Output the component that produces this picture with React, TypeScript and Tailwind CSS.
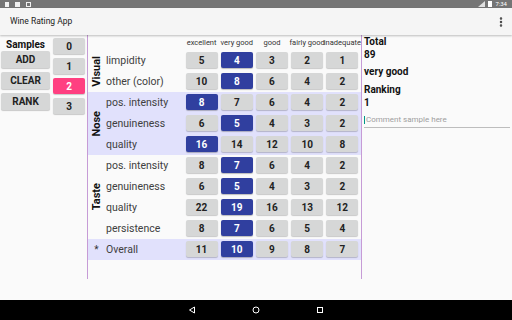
import { MoreVertical } from "lucide-react";

type Row = { label: string; values: number[]; selected: number };
type Section = { name: string; tinted: boolean; rows: Row[] };

const columns = ["excellent", "very good", "good", "fairly good", "inadequate"];

const sections: Section[] = [
  {
    name: "Visual",
    tinted: false,
    rows: [
      { label: "limpidity", values: [5, 4, 3, 2, 1], selected: 1 },
      { label: "other (color)", values: [10, 8, 6, 4, 2], selected: 1 },
    ],
  },
  {
    name: "Nose",
    tinted: true,
    rows: [
      { label: "pos. intensity", values: [8, 7, 6, 4, 2], selected: 0 },
      { label: "genuineness", values: [6, 5, 4, 3, 2], selected: 1 },
      { label: "quality", values: [16, 14, 12, 10, 8], selected: 0 },
    ],
  },
  {
    name: "Taste",
    tinted: false,
    rows: [
      { label: "pos. intensity", values: [8, 7, 6, 4, 2], selected: 1 },
      { label: "genuineness", values: [6, 5, 4, 3, 2], selected: 1 },
      { label: "quality", values: [22, 19, 16, 13, 12], selected: 1 },
      { label: "persistence", values: [8, 7, 6, 5, 4], selected: 1 },
    ],
  },
];

const overall: Row = { label: "Overall", values: [11, 10, 9, 8, 7], selected: 1 };

function ScoreCells({ row }: { row: Row }) {
  return (
    <>
      {row.values.map((v, i) => (
        <div key={i} className="flex w-[35.2px] justify-center pt-[2px]">
          <div
            className={
              i === row.selected
                ? "flex h-[16px] w-[32px] items-center justify-center rounded-[2px] bg-[#303f9f] text-[10px] font-bold text-white shadow-[0_1px_1px_rgba(0,0,0,0.25)]"
                : "flex h-[16px] w-[32px] items-center justify-center rounded-[2px] bg-[#d6d7d7] text-[10px] font-bold text-[#222] shadow-[0_1px_1px_rgba(0,0,0,0.2)]"
            }
          >
            {v}
          </div>
        </div>
      ))}
    </>
  );
}

function ScoreRow({ row }: { row: Row }) {
  return (
    <div className="flex h-[21px] items-start">
      <div className="w-[79px] pl-[1px] text-[10.5px] leading-[21px] text-[#404040]">{row.label}</div>
      <ScoreCells row={row} />
    </div>
  );
}

function SideButton({ label }: { label: string }) {
  return (
    <div className="flex h-[17px] w-[49px] items-center justify-center rounded-[2px] bg-[#d6d7d7] text-[10px] font-bold text-[#222] shadow-[0_1px_1px_rgba(0,0,0,0.2)]">
      {label}
    </div>
  );
}

export default function App() {
  return (
    <div className="flex h-[320px] w-[512px] flex-col overflow-hidden bg-[#fafafa] font-['Roboto',sans-serif]">
      {/* status bar */}
      <div className="flex h-[8px] items-center bg-[#757575] px-[5px]">
        <div className="flex gap-[6px]">
          <div className="h-[5px] w-[4px] bg-white/90" />
          <div className="h-[5px] w-[5px] bg-white/90" />
          <div className="h-[5px] w-[5px] border border-white/90" />
        </div>
        <div className="ml-auto flex items-center gap-[3px]">
          <svg width="7" height="6" viewBox="0 0 7 6">
            <path d="M7 0 L7 6 L0 6 Z" fill="#e0e0e0" />
          </svg>
          <div className="h-[6px] w-[4px] bg-white" />
          <span className="text-[6px] leading-[8px] text-white">7:34</span>
        </div>
      </div>

      {/* app bar */}
      <div className="relative z-10 flex h-[27px] items-center bg-[#f5f5f5] pl-[10px] pr-[5px] shadow-[0_1px_2px_rgba(0,0,0,0.25)]">
        <span className="text-[8.5px] text-[#212121]">Wine Rating App</span>
        <MoreVertical size={12} strokeWidth={3} className="ml-auto text-[#444]" />
      </div>

      <div className="flex flex-1">
        {/* samples */}
        <div className="flex w-[87px]">
          <div className="flex w-[52px] flex-col items-start pl-[1px]">
            <div className="w-[49px] pt-[3px] text-center text-[10px] font-bold leading-[13px] text-[#111]">
              Samples
            </div>
            <div className="flex flex-col gap-[4px]">
              <SideButton label="ADD" />
              <SideButton label="CLEAR" />
              <SideButton label="RANK" />
            </div>
          </div>
          <div className="flex flex-col gap-[4px] pl-[1px] pt-[3px]">
            {[0, 1, 2, 3].map((n) => (
              <div
                key={n}
                className={
                  n === 2
                    ? "flex h-[16px] w-[32px] items-center justify-center rounded-[2px] bg-[#ff4081] text-[10px] font-bold text-white shadow-[0_1px_1px_rgba(0,0,0,0.2)]"
                    : "flex h-[16px] w-[32px] items-center justify-center rounded-[2px] bg-[#d6d7d7] text-[10px] font-bold text-[#222] shadow-[0_1px_1px_rgba(0,0,0,0.2)]"
                }
              >
                {n}
              </div>
            ))}
          </div>
        </div>

        {/* rating table */}
        <div className="h-[244px] w-[275px] border-x border-[#c69bd6]">
          <div className="flex h-[15px] items-center pl-[96px]">
            {columns.map((c) => (
              <div key={c} className="flex w-[35.2px] justify-center whitespace-nowrap text-[7.5px] text-[#333]">
                {c}
              </div>
            ))}
          </div>
          {sections.map((s) => (
            <div key={s.name} className={s.tinted ? "flex bg-[#e1e1fc]" : "flex"}>
              <div className="flex w-[17px] items-center justify-center">
                <span className="rotate-180 text-[11px] font-bold leading-[12px] text-[#111] [writing-mode:vertical-rl]">
                  {s.name}
                </span>
              </div>
              <div>
                {s.rows.map((r, i) => (
                  <ScoreRow key={i} row={r} />
                ))}
              </div>
            </div>
          ))}
          <div className="flex bg-[#e1e1fc]">
            <div className="w-[17px] text-center text-[10px] leading-[21px] text-[#333]">*</div>
            <ScoreRow row={overall} />
          </div>
        </div>

        {/* summary */}
        <div className="flex flex-1 flex-col pl-[2px] pr-[2px] text-[10px] text-[#111]">
          <div className="font-bold leading-[13px]">Total</div>
          <div className="font-bold leading-[13px]">89</div>
          <div className="mt-[4px] font-bold leading-[13px]">very good</div>
          <div className="mt-[5px] font-bold leading-[13px]">Ranking</div>
          <div className="font-bold leading-[13px]">1</div>
          <div className="mt-[4px] flex h-[15px] items-center border-b border-[#bdbdbd] text-[8px] text-[#9e9e9e]">
            <span className="mr-px inline-block h-[8px] w-px bg-[#009688]" />
            Comment sample here
          </div>
        </div>
      </div>

      {/* navigation bar */}
      <div className="flex h-[20px] items-center justify-center gap-[56px] bg-black">
        <svg width="8" height="8" viewBox="0 0 8 8">
          <path d="M6.5 1 L6.5 7 L1.5 4 Z" fill="none" stroke="#fff" strokeWidth="1" strokeLinejoin="round" />
        </svg>
        <svg width="8" height="8" viewBox="0 0 8 8">
          <circle cx="4" cy="4" r="3" fill="none" stroke="#fff" strokeWidth="1" />
        </svg>
        <svg width="8" height="8" viewBox="0 0 8 8">
          <rect x="1.5" y="1.5" width="5" height="5" fill="none" stroke="#fff" strokeWidth="1" />
        </svg>
      </div>
    </div>
  );
}
